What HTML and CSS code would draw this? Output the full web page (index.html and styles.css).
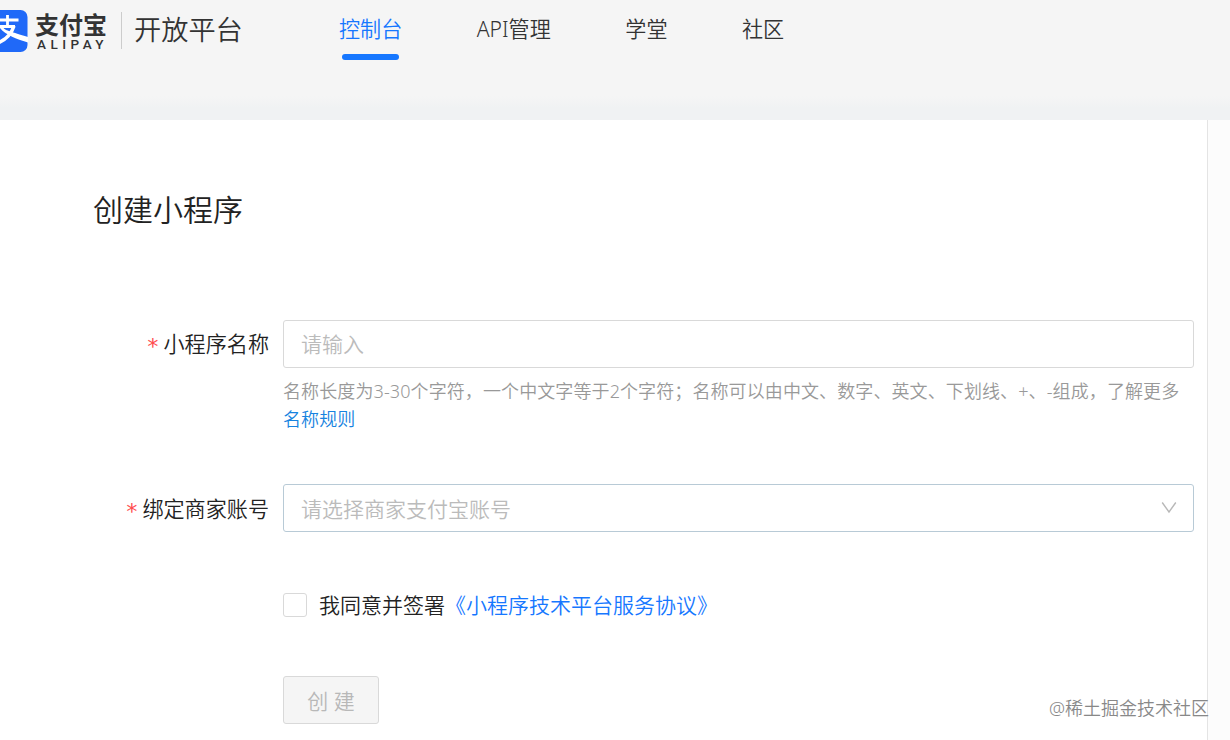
FILE: index.html
```
<!DOCTYPE html>
<html lang="zh-CN">
<head>
    <meta charset="UTF-8">
    <meta name="viewport" content="width=device-width, initial-scale=1.0">
    <title>创建小程序</title>
    <link rel="stylesheet" href="styles.css">
</head>
<body>
    <header class="header">
        <svg class="logo-mark" width="28" height="42" viewBox="0 0 28 42">
            <rect x="-14" y="0" width="41.5" height="42" rx="7" fill="#2069f8"/>
            <path d="M-6 10H18.500M7.500 5V17M-4 16.500H15" stroke="#fff" stroke-width="2.800" fill="none"/>
            <path d="M14 16C11 25 4 31 -4 33.500" stroke="#fff" stroke-width="3.500" fill="none"/>
            <path d="M0 18L3 17.500C6 21 11 21.500 28 27V32.500C18 29.500 5 25 0 18Z" fill="#fff"/>
        </svg>
        <div class="logo-text">
            <span class="logo-cn">支付宝</span>
            <span class="logo-en">ALIPAY</span>
        </div>
        <div class="platform">开放平台</div>
        <nav class="nav">
            <a class="nav-item active">控制台</a>
            <a class="nav-item">API管理</a>
            <a class="nav-item">学堂</a>
            <a class="nav-item">社区</a>
        </nav>
    </header>

    <div class="page">
        <main class="content">
            <h1>创建小程序</h1>

            <div class="form-group">
                <label class="form-label" for="name">小程序名称</label>
                <div class="form-control">
                    <input type="text" id="name" class="input" placeholder="请输入">
                    <div class="hint">名称长度为3-30个字符，一个中文字等于2个字符；名称可以由中文、数字、英文、下划线、+、-组成，了解更多<br><a class="link">名称规则</a></div>
                </div>
            </div>

            <div class="form-group account">
                <label class="form-label">绑定商家账号</label>
                <div class="form-control">
                    <div class="select">
                        <span>请选择商家支付宝账号</span>
                        <svg width="16" height="14" viewBox="0 0 16 14">
                            <path d="M1.200 1.500L8 11L14.800 1.500" fill="none" stroke="#b8b8b8" stroke-width="1.400"/>
                        </svg>
                    </div>
                </div>
            </div>

            <div class="agreement">
                <span class="checkbox"></span>
                <span class="agreement-text">我同意并签署<a class="link-blue">《小程序技术平台服务协议》</a></span>
            </div>

            <button class="btn" disabled>创 建</button>
        </main>
    </div>
    <div class="watermark">@稀土掘金技术社区</div>
</body>
</html>
```
FILE: styles.css
```
* {
    box-sizing: border-box;
}

body {
    margin: 0;
    height: 740px;
    overflow: hidden;
    display: flex;
    flex-direction: column;
    font-family: "Noto Sans", "Noto Sans CJK SC", sans-serif;
    font-size: 21px;
    font-weight: 350;
    color: #222;
    background: #fff;
}

.header {
    display: flex;
    align-items: flex-start;
    flex: none;
    height: 120px;
    background: linear-gradient(#f5f5f5 80%, #f0f2f3 90%);
}

.logo-mark {
    margin-top: 10px;
}

.logo-text {
    display: flex;
    flex-direction: column;
    width: 86px;
    margin: 12px 0 0 7px;
    color: #333;
}

.logo-cn {
    font-size: 24px;
    line-height: 25px;
    font-weight: 700;
}

.logo-en {
    padding-left: 2px;
    font-family: "Roboto", sans-serif;
    font-size: 13.5px;
    line-height: 15px;
    font-weight: 500;
    letter-spacing: 4.5px;
}

.platform {
    width: 218px;
    height: 37px;
    margin-top: 12px;
    padding-left: 12px;
    border-left: 1px solid #ccc;
    font-size: 27.2px;
    line-height: 35px;
    color: #333;
}

.nav {
    display: flex;
    gap: 74.5px;
}

.nav-item {
    display: flex;
    flex-direction: column;
    align-items: center;
    height: 60px;
    font-size: 21.1px;
    line-height: 58px;
    color: #333;
}

.nav-item.active {
    color: #1677ff;
}

.nav-item.active::after {
    content: "";
    width: 57px;
    height: 6px;
    margin-top: -4px;
    border-radius: 3px;
    background: #1677ff;
}

.page {
    flex: 1;
    display: flex;
    background: #fcfcfc;
}

.content {
    width: 1208px;
    padding: 65px 13px 0 93px;
    border-right: 1px solid #e4e4e4;
    background: #fff;
}

h1 {
    margin: 0 0 85px;
    font-size: 30px;
    line-height: 50px;
    font-weight: 350;
}

.form-group {
    display: flex;
    height: 164px;
}

.form-group.account {
    height: 109px;
}

.form-label {
    display: flex;
    justify-content: flex-end;
    width: 190px;
    height: 48px;
    padding-right: 14px;
    font-size: 21.1px;
    line-height: 47px;
}

.account .form-label {
    line-height: 49px;
}

.form-label::before {
    content: "*";
    margin-right: 4px;
    padding-top: 3px;
    font-family: "DejaVu Sans Mono", monospace;
    font-size: 22px;
    color: #ff4d4f;
}

.form-control {
    flex: 1;
    min-width: 0;
}

.input,
.select {
    display: flex;
    align-items: center;
    justify-content: space-between;
    width: 100%;
    height: 48px;
    padding: 0 16px 0 17px;
    border: 1px solid #d9d9d9;
    border-radius: 3px;
    background: #fff;
    font: inherit;
    color: #bbb;
}

.input::placeholder {
    color: #bbb;
}

.select {
    border-color: #b8cad6;
}

.hint {
    margin-top: 9px;
    font-size: 18px;
    line-height: 28px;
    letter-spacing: 0.1px;
    white-space: nowrap;
    color: #999;
}

.link {
    color: #1683e0;
}

.link-blue {
    color: #1677ff;
}

.agreement {
    display: flex;
    align-items: center;
    gap: 12px;
    height: 24px;
    margin: 0 0 59px 190px;
}

.agreement-text {
    padding-bottom: 2px;
}

.checkbox {
    width: 24px;
    height: 24px;
    border: 1px solid #d9d9d9;
    border-radius: 3px;
}

.btn {
    display: block;
    width: 96px;
    height: 48px;
    margin-left: 190px;
    padding: 0;
    border: 1px solid #d9d9d9;
    border-radius: 3px;
    background: #f5f5f5;
    font: inherit;
    color: #b8b8b8;
}

.watermark {
    position: absolute;
    right: 21px;
    bottom: 18px;
    font-size: 18px;
    line-height: 28px;
    color: #888;
}
```
